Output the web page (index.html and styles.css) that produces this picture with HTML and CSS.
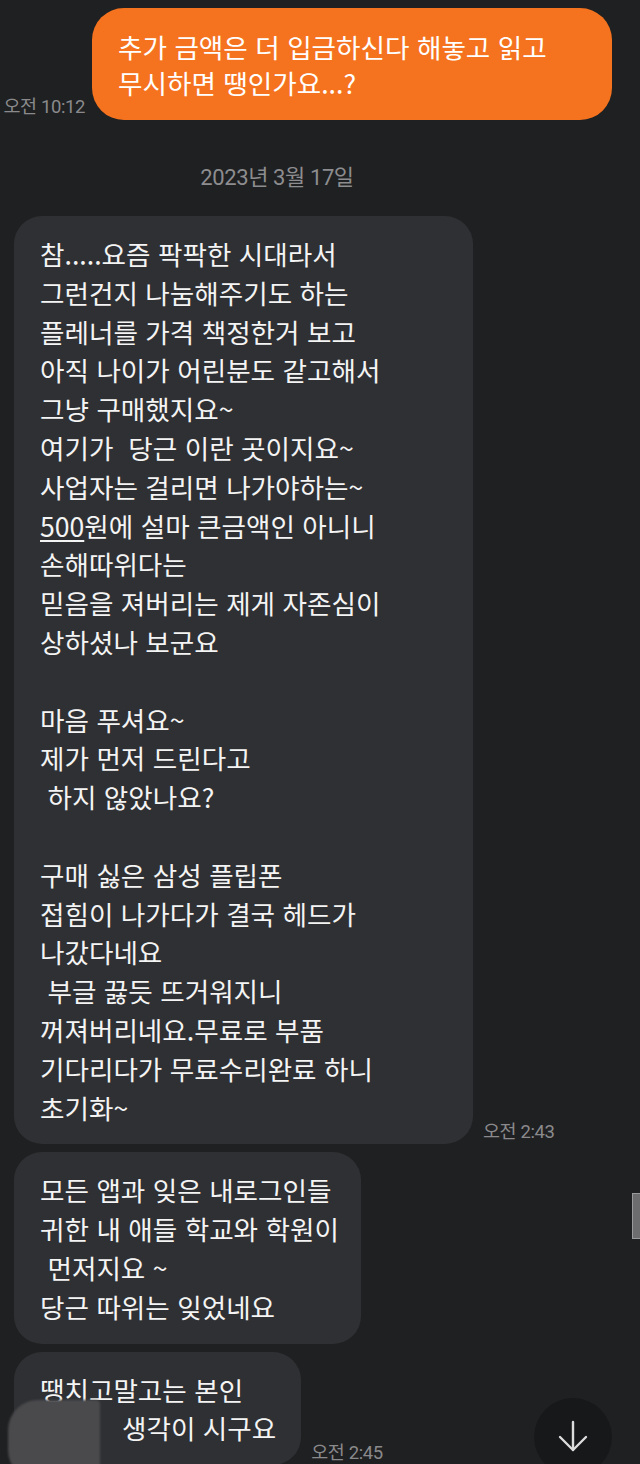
FILE: index.html
```html
<!DOCTYPE html>
<html lang="ko">
<head>
    <meta charset="UTF-8">
    <meta name="viewport" content="width=device-width, initial-scale=1.0">
    <title>채팅</title>
    <link rel="stylesheet" href="styles.css">
</head>
<body>
    <div class="chat">
        <div class="row out">
            <div class="time">오전 10:12</div>
            <div class="bubble mine">추가 금액은 더 입금하신다 해놓고 읽고<br>무시하면 땡인가요...?</div>
        </div>

        <div class="date">2023년 3월 17일</div>

        <div class="row in">
            <div class="bubble other wide">참.....요즘 팍팍한 시대라서<br>그런건지 나눔해주기도 하는<br>플레너를 가격 책정한거 보고<br>아직 나이가 어린분도 같고해서<br>그냥 구매했지요~<br>여기가&nbsp; 당근 이란 곳이지요~<br>사업자는 걸리면 나가야하는~<br><u>500</u>원에 설마 큰금액인 아니니<br>손해따위다는<br>믿음을 져버리는 제게 자존심이<br>상하셨나 보군요<br><br>마음 푸셔요~<br>제가 먼저 드린다고<br>&nbsp;하지 않았나요?<br><br>구매 싫은 삼성 플립폰<br>접힘이 나가다가 결국 헤드가<br>나갔다네요<br>&nbsp;부글 끓듯 뜨거워지니<br>꺼져버리네요.무료로 부품<br>기다리다가 무료수리완료 하니<br>초기화~</div>
            <div class="time">오전 2:43</div>
        </div>

        <div class="row in">
            <div class="bubble other">모든 앱과 잊은 내로그인들<br>귀한 내 애들 학교와 학원이<br>&nbsp;먼저지요 ~<br>당근 따위는 잊었네요</div>
        </div>

        <div class="row in">
            <div class="bubble other last">땡치고말고는 본인<br><span class="indent"></span>생각이 시구요
                <div class="smudge"></div>
            </div>
            <div class="time">오전 2:45</div>
        </div>
    </div>

    <div class="scrollbar"></div>

    <button class="down-btn" aria-label="아래로">
        <svg width="30" height="32" viewBox="0 0 30 32" fill="none" stroke="#dcdcdc" stroke-width="2.4" stroke-linecap="round" stroke-linejoin="round">
            <path d="M15 2 V30"/>
            <path d="M2 17 L15 30 L28 17"/>
        </svg>
    </button>
</body>
</html>
```

FILE: styles.css
```css
body {
    margin: 0;
    width: 640px;
    height: 1464px;
    overflow: hidden;
    background-color: #1f2022;
    font-family: Roboto, "Noto Sans CJK KR", sans-serif;
    position: relative;
}
.chat {
    padding-top: 8px;
    display: flex;
    flex-direction: column;
}
.row {
    display: flex;
    align-items: flex-end;
}
.row.out {
    justify-content: flex-end;
    padding-right: 28px;
    gap: 7px;
}
.row.in {
    padding-left: 14px;
    gap: 10px;
    margin-bottom: 8px;
}
.time {
    color: #8a8a8c;
    font-size: 18.5px;
    line-height: 22px;
    margin-bottom: 1px;
    white-space: nowrap;
    letter-spacing: -0.4px;
}
.row.out .time {
    margin-bottom: 2px;
}
.bubble {
    font-family: "Noto Sans CJK KR", sans-serif;
    font-size: 26.6px;
    color: #f4f4f4;
    box-sizing: border-box;
}
.bubble.mine {
    width: 520px;
    background-color: #f5731f;
    border-radius: 32px;
    padding: 21px 26px 19px 26px;
    line-height: 36px;
    color: #fff;
}
.bubble.other {
    background-color: #2f3033;
    border-radius: 28px;
    padding: 19px 22px 17px 26px;
    line-height: 38.8px;
}
.bubble.wide {
    width: 459px;
}
.bubble u {
    text-decoration-thickness: 2px;
    text-underline-offset: 3px;
}
.bubble.last {
    position: relative;
    padding-right: 25px;
}
.indent {
    display: inline-block;
    width: 82px;
}
.smudge {
    position: absolute;
    left: -6px;
    top: 48px;
    width: 92px;
    height: 80px;
    background-color: #4a4a4d;
    border-radius: 30px 4px 0 30px;
    filter: blur(1px);
}
.date {
    color: #8d8d8f;
    font-size: 22px;
    line-height: 26px;
    letter-spacing: -0.4px;
    text-align: center;
    padding-right: 86px;
    margin: 45px 0 25px;
}
.scrollbar {
    position: absolute;
    right: 0;
    top: 1193px;
    width: 7px;
    height: 44px;
    background-color: #6d6d6f;
    border: 1px solid #9a9a9c;
    border-right: none;
}
.down-btn {
    position: absolute;
    left: 534px;
    top: 1398px;
    width: 78px;
    height: 78px;
    border-radius: 50%;
    border: none;
    padding: 0;
    background-color: #17181a;
    display: flex;
    justify-content: center;
    align-items: center;
}
.down-btn svg {
    margin-top: -2px;
}
```
